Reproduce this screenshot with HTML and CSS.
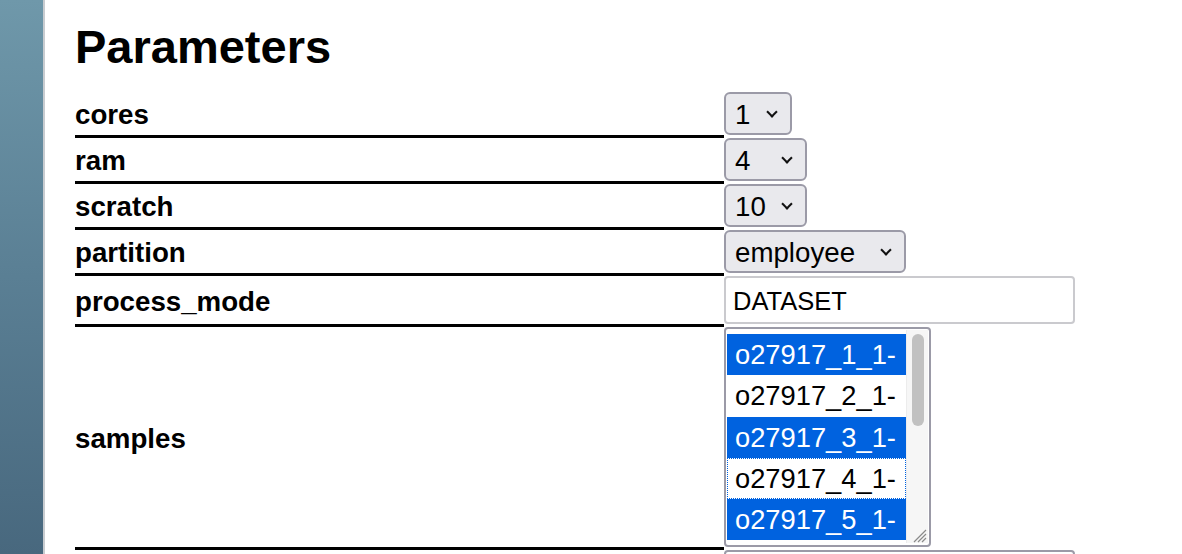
FILE: index.html
```html
<!DOCTYPE html>
<html lang="en">
<head>
<meta charset="utf-8">
<title>Parameters</title>
<link rel="stylesheet" href="styles.css">
</head>
<body>
<div class="page">
  <aside class="sidebar"></aside>
  <main class="content">
    <h1 class="title">Parameters</h1>
    <table class="params">
      <tr>
        <td class="label">cores</td>
        <td class="value">
          <div class="sel w-cores"><select><option>1</option><option>2</option><option>4</option><option>8</option></select></div>
        </td>
      </tr>
      <tr>
        <td class="label">ram</td>
        <td class="value">
          <div class="sel w-ram"><select><option>4</option><option>8</option><option>16</option><option>32</option><option>64</option></select></div>
        </td>
      </tr>
      <tr>
        <td class="label">scratch</td>
        <td class="value">
          <div class="sel w-ram"><select><option>10</option><option>50</option><option>100</option></select></div>
        </td>
      </tr>
      <tr>
        <td class="label">partition</td>
        <td class="value">
          <div class="sel w-part"><select><option>employee</option><option>general</option></select></div>
        </td>
      </tr>
      <tr>
        <td class="label">process_mode</td>
        <td class="value">
          <input class="text" type="text" value="DATASET">
        </td>
      </tr>
      <tr>
        <td class="label">samples</td>
        <td class="value">
          <div class="listbox">
            <div class="opts">
              <div class="opt chosen">o27917_1_1-</div>
              <div class="opt">o27917_2_1-</div>
              <div class="opt chosen">o27917_3_1-</div>
              <div class="opt focus">o27917_4_1-</div>
              <div class="opt chosen">o27917_5_1-</div>
            </div>
            <div class="scroll"><div class="thumb"></div></div>
            <svg class="grip" width="16" height="16" viewBox="0 0 16 16">
              <path d="M15 3 L3 15 M15 7 L7 15 M15 11 L11 15" stroke="#8a8a8a" stroke-width="1.2" fill="none"/>
            </svg>
          </div>
        </td>
      </tr>
      <tr>
        <td class="label"></td>
        <td class="value">
          <div class="area"></div>
        </td>
      </tr>
    </table>
  </main>
</div>
</body>
</html>
```
FILE: styles.css
```css
html, body {
  margin: 0;
  padding: 0;
  background: #ffffff;
}

body {
  font-family: "Liberation Sans", Arial, sans-serif;
  color: #000;
}

.page {
  display: flex;
  height: 100vh;
  overflow: hidden;
}

.sidebar {
  flex: 0 0 43px;
  background: linear-gradient(180deg, #6f98aa 0%, #5a7f94 50%, #48687e 100%);
  border-right: 2px solid #c8ccd0;
}

.content {
  flex: 1;
  padding: 20px 0 0 30px;
}

.title {
  margin: 0 0 19px 0;
  font-size: 47px;
  line-height: 53px;
  font-weight: bold;
}

.params {
  border-collapse: separate;
  border-spacing: 0;
}

.params td {
  padding: 0;
}

.params td.label {
  width: 649px;
  padding-top: 3px;
  font-size: 27.7px;
  font-weight: bold;
  vertical-align: middle;
  border-bottom: 3px solid #000;
  text-align: left;
}

.value {
  vertical-align: top;
  border-bottom: 3px solid transparent;
}

.sel {
  position: relative;
}

.sel::after {
  content: "";
  position: absolute;
  right: 16px;
  top: 16px;
  width: 6px;
  height: 6px;
  border-right: 2px solid #111;
  border-bottom: 2px solid #111;
  transform: rotate(45deg);
  pointer-events: none;
}

.sel select {
  display: block;
  width: 100%;
  height: 43px;
  box-sizing: border-box;
  -webkit-appearance: none;
  appearance: none;
  margin: 0;
  padding: 2px 0 0 9px;
  font-family: "Liberation Sans", Arial, sans-serif;
  font-size: 27.7px;
  color: #000;
  background: #e9e9ed;
  border: 2px solid #9b9aa7;
  border-radius: 6px;
}

.w-cores { width: 68px; }
.w-ram { width: 83px; }
.w-part { width: 182px; }

.text {
  display: block;
  width: 351px;
  height: 48px;
  box-sizing: border-box;
  margin: 0;
  padding: 2px 0 0 7px;
  font-family: "Liberation Sans", Arial, sans-serif;
  font-size: 25.5px;
  color: #000;
  background: #fff;
  border: 2px solid #cacace;
  border-radius: 4px;
}

.listbox {
  position: relative;
  display: flex;
  width: 207px;
  height: 220px;
  box-sizing: border-box;
  padding: 5px 1px 2px 1px;
  border: 2px solid #9b9aa7;
  border-radius: 4px;
  background: #fff;
  overflow: hidden;
}

.opts {
  flex: 1;
  overflow: hidden;
}

.opt {
  height: 41.3px;
  line-height: 41.3px;
  padding-left: 8px;
  font-size: 27.3px;
  white-space: nowrap;
  box-sizing: border-box;
}

.opt.chosen {
  background: #0062df;
  color: #fff;
}

.opt.focus {
  outline: 1px dotted #0062df;
  outline-offset: -1px;
}

.scroll {
  flex: 0 0 22px;
  margin-top: -4px;
  background: #f6f6f6;
  border-left: 1px solid #ececec;
  display: flex;
  justify-content: center;
  padding-top: 4px;
  box-sizing: border-box;
}

.thumb {
  width: 12px;
  height: 92px;
  border-radius: 6px;
  background: #c1c1c1;
}

.grip {
  position: absolute;
  right: 2px;
  bottom: 2px;
}

.area {
  width: 351px;
  height: 140px;
  box-sizing: border-box;
  border: 2px solid #9b9aa7;
  border-radius: 4px;
  background: #fff;
}
```
